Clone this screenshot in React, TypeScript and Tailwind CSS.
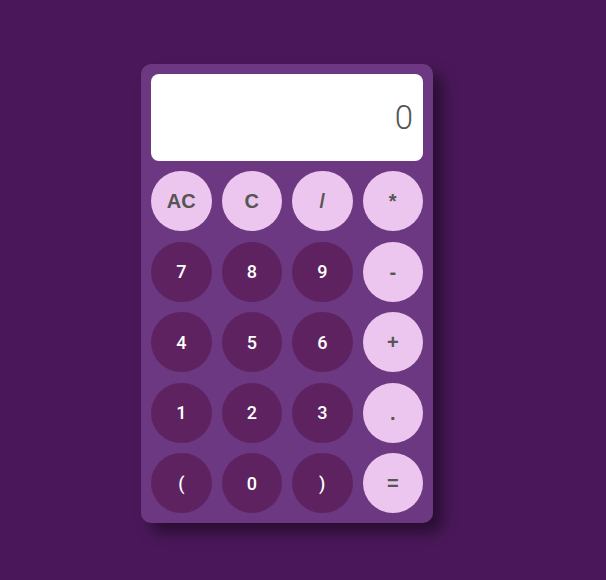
const KEYS: { label: string; light?: boolean }[] = [
  { label: "AC", light: true },
  { label: "C", light: true },
  { label: "/", light: true },
  { label: "*", light: true },
  { label: "7" },
  { label: "8" },
  { label: "9" },
  { label: "-", light: true },
  { label: "4" },
  { label: "5" },
  { label: "6" },
  { label: "+", light: true },
  { label: "1" },
  { label: "2" },
  { label: "3" },
  { label: ".", light: true },
  { label: "(" },
  { label: "0" },
  { label: ")" },
  { label: "=", light: true },
];

export default function App() {
  return (
    <div
      className="min-h-[580px] bg-[#4a185a] pt-[64px] pl-[141px]"
      style={{ fontFamily: '"Liberation Sans", Arial, sans-serif' }}
    >
      <div className="w-[292px] rounded-[10px] bg-[#6c3882] p-[10px] shadow-[10px_10px_15px_rgba(0,0,0,0.45)]">
        {/* Display */}
        <div className="flex h-[87px] items-center justify-end rounded-[8px] bg-white pr-[10px] font-['Roboto',sans-serif] text-[33px] font-light text-[#555]">
          0
        </div>

        {/* Keys */}
        <div className="mt-[10px] grid grid-cols-4 gap-x-[10px] gap-y-[10.5px]">
          {KEYS.map((k) => (
            <button
              key={k.label}
              className={
                k.light
                  ? "flex h-[60px] items-center justify-center rounded-full bg-[#ecc6ee] text-[20px] font-bold text-[#555]"
                  : "flex h-[60px] items-center justify-center rounded-full bg-[#5e2260] font-['Roboto',sans-serif] text-[18px] font-medium text-white"
              }
            >
              {k.label}
            </button>
          ))}
        </div>
      </div>
    </div>
  );
}
